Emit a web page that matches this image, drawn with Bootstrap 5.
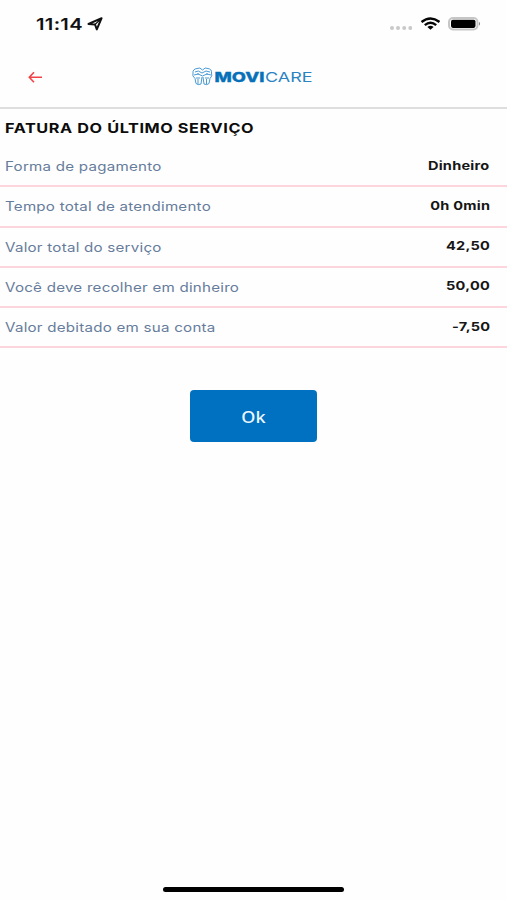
<!DOCTYPE html>
<html lang="pt-BR">
<head>
<meta charset="utf-8">
<meta name="viewport" content="width=device-width, initial-scale=1">
<title>Movicare</title>
<link href="https://cdn.jsdelivr.net/npm/bootstrap@5.3.0/dist/css/bootstrap.min.css" rel="stylesheet">
<script src="https://cdn.jsdelivr.net/npm/bootstrap@5.3.0/dist/js/bootstrap.bundle.min.js" defer></script>
<style>
  body { font-family: Inter, "Liberation Sans", sans-serif; color: #111; background: #fefefe; }
  svg { display: block; flex: none; }
  .screen { height: 900px; }
  .status-bar { height: 47px; padding: 0 26px 0 36px; }
  .stretch { display: inline-block; white-space: nowrap; transform: scaleX(1.22); transform-origin: left center; }
  .stretch-end { transform-origin: right center; }
  .clock { font-size: 16.5px; font-weight: 600; line-height: 48px; width: 51px; letter-spacing: .25px; }
  .app-bar { height: 62px; border-bottom: 2px solid #dedede; padding: 0 28px; }
  .side { width: 164px; }
  .invoice-title { font-size: 13.3px; font-weight: 700; line-height: 20px; padding: 9px 5px 0; color: #0c0c0c; height: 38.3px; margin: 0; letter-spacing: .5px; }
  .line-item { height: 40.2px; border-bottom: 2px solid #fdd5dc; padding: 0 17px 0 5px; line-height: 20px; }
  .item-name { font-size: 12.4px; color: #667c9b; letter-spacing: .2px; padding-top: 10px; }
  .item-value { font-size: 11.9px; font-weight: 700; color: #161616; letter-spacing: .22px; padding-top: 8.500px; }
  .btn-ok { width: 127px; height: 52px; margin-top: 42px; background: #0070c0; color: #eef8ff; border: 0; border-radius: 4px; font: 500 17px "Noto Sans", sans-serif; }
  .btn-ok .stretch { transform: scaleX(1.06); transform-origin: center; }
  .home-bar { width: 181px; height: 5px; margin-bottom: 8px; background: #000; }
</style>
</head>
<body>
<div class="screen d-flex flex-column">
  <div class="status-bar d-flex align-items-center">
    <span class="clock"><span class="stretch">11:14</span></span>
    <svg width="16" height="14" viewBox="0 0 16 14"><path d="M1.500 7 14.600 1.200 9.800 12.400 8 7.500Z" fill="none" stroke="#111" stroke-width="2" stroke-linejoin="round"/><path d="M8 7.500 14 1.800" stroke="#111" stroke-width="1.200"/></svg>
    <div class="ms-auto d-flex align-items-center">
      <svg width="24" height="14" viewBox="0 0 24 14" fill="#c9c9c9"><circle cx="4" cy="11" r="2"/><circle cx="10" cy="11" r="2"/><circle cx="16.200" cy="11" r="2"/><circle cx="22.300" cy="11" r="2"/></svg>
      <svg class="ms-2" width="20" height="14" viewBox="0 0 20 14"><g fill="none" stroke="#050505" stroke-width="2.400"><path d="M1.500 5Q10.500-2 19.500 5"/><path d="M4.800 8.100Q10.500 3.300 16.200 8.100"/></g><path d="M7.400 10Q10.500 7.600 13.600 10L10.500 12.800Z" fill="#050505"/></svg>
      <svg class="ms-2" width="33" height="14" viewBox="0 0 33 14"><rect x="1" y="1" width="28.500" height="11.500" rx="4" fill="#fff" stroke="#c6c6c6" stroke-width="2"/><rect x="3" y="2.700" width="24.500" height="8.200" rx="1.800" fill="#000"/><path d="M31 4.800v4q2.200-2 0-4" fill="#888"/></svg>
    </div>
  </div>
  <header class="app-bar d-flex align-items-center">
    <div class="side"><svg width="15" height="12" viewBox="0 0 15 12"><path d="M6 1.300 1.300 6.300 6 11.300M1.300 6.300H14" fill="none" stroke="#f24448" stroke-width="1.600"/></svg></div>
    <svg width="122" height="22" viewBox="0 0 122 22">
      <g fill="none" stroke="#4a9bd3" stroke-width="1">
        <path d="M10.500 4Q8 .8 5 2.500 .500 3.200 1 7 -.2 10 3 12.500L4 17.500Q6 19.500 9 18L10 11M10.500 4Q13 .8 16 2.500 20 3.200 19.500 7 20.800 10 18 12.500L17 17.500Q15 19.500 12 18L11 11"/>
        <path d="M3 6Q6 3.500 10 7 14 3.500 18 6M2 9Q6 6.500 10.500 10 15 6.500 19 9M4 12H8M13 12H17M6 13V18M14.500 13V18M5 8H7M14 8H16"/>
      </g>
      <text x="22.500" y="15.500" font-family="Inter, sans-serif" font-size="13.500" font-weight="800" fill="#0870b9" stroke="#0870b9" stroke-width=".3" textLength="50" lengthAdjust="spacingAndGlyphs">MOVI</text>
      <text x="73" y="15.500" font-family="Inter, sans-serif" font-size="13.500" font-weight="400" fill="#2b83c2" textLength="47.500" lengthAdjust="spacingAndGlyphs">CARE</text>
    </svg>
  </header>
  <main class="flex-grow-1">
    <h1 class="invoice-title"><span class="stretch">FATURA DO ÚLTIMO SERVIÇO</span></h1>
    <div class="line-item d-flex justify-content-between"><span class="item-name stretch">Forma de pagamento</span><span class="item-value stretch stretch-end">Dinheiro</span></div>
    <div class="line-item d-flex justify-content-between"><span class="item-name stretch">Tempo total de atendimento</span><span class="item-value stretch stretch-end">0h 0min</span></div>
    <div class="line-item d-flex justify-content-between"><span class="item-name stretch">Valor total do serviço</span><span class="item-value stretch stretch-end">42,50</span></div>
    <div class="line-item d-flex justify-content-between"><span class="item-name stretch">Você deve recolher em dinheiro</span><span class="item-value stretch stretch-end">50,00</span></div>
    <div class="line-item d-flex justify-content-between"><span class="item-name stretch">Valor debitado em sua conta</span><span class="item-value stretch stretch-end">-7,50</span></div>
    <div class="text-center"><button class="btn btn-ok" type="button"><span class="stretch">Ok</span></button></div>
  </main>
  <div class="home-bar rounded-pill mx-auto"></div>
</div>
</body>
</html>
